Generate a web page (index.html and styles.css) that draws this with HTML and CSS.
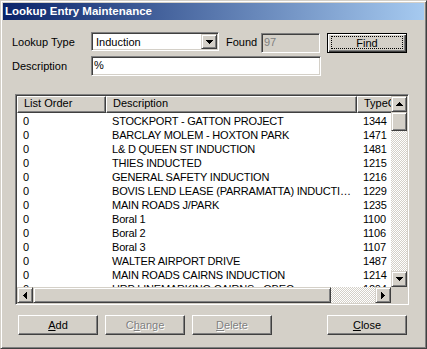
FILE: index.html
```html
<!DOCTYPE html>
<html lang="en">
<head>
    <meta charset="UTF-8">
    <title>Lookup Entry Maintenance</title>
    <link rel="stylesheet" href="styles.css">
</head>
<body>
    <div class="window">
        <div class="titlebar">Lookup Entry Maintenance</div>
        <div class="client">
            <div class="form-row row-type">
                <label class="field-label">Lookup Type</label>
                <div class="combo">
                    <span class="combo-text">Induction</span>
                    <span class="combo-btn">
                        <svg width="7" height="4" viewBox="0 0 7 4" shape-rendering="crispEdges"><path d="M0 0h7v1H0zM1 1h5v1H1zM2 2h3v1H2zM3 3h1v1H3z" fill="#000"/></svg>
                    </span>
                </div>
                <label class="found-label">Found</label>
                <div class="edit found-edit">97</div>
                <button class="btn btn-default find-btn"><span class="focus-rect">Find</span></button>
            </div>
            <div class="form-row row-desc">
                <label class="field-label">Description</label>
                <div class="edit desc-edit">%</div>
            </div>

            <div class="listview">
                <div class="lv-view">
                    <div class="lv-header">
                        <div class="lv-head col-order">List Order</div>
                        <div class="lv-head col-desc">Description</div>
                        <div class="lv-head col-type">TypeCode</div>
                    </div>
                    <div class="lv-row"><div class="col-order">0</div><div class="col-desc">STOCKPORT - GATTON PROJECT</div><div class="col-type">1344</div></div>
                    <div class="lv-row"><div class="col-order">0</div><div class="col-desc">BARCLAY MOLEM - HOXTON PARK</div><div class="col-type">1471</div></div>
                    <div class="lv-row"><div class="col-order">0</div><div class="col-desc">L&amp; D QUEEN ST INDUCTION</div><div class="col-type">1481</div></div>
                    <div class="lv-row"><div class="col-order">0</div><div class="col-desc">THIES INDUCTED</div><div class="col-type">1215</div></div>
                    <div class="lv-row"><div class="col-order">0</div><div class="col-desc">GENERAL SAFETY INDUCTION</div><div class="col-type">1216</div></div>
                    <div class="lv-row"><div class="col-order">0</div><div class="col-desc">BOVIS LEND LEASE (PARRAMATTA) INDUCTION</div><div class="col-type">1229</div></div>
                    <div class="lv-row"><div class="col-order">0</div><div class="col-desc">MAIN ROADS J/PARK</div><div class="col-type">1235</div></div>
                    <div class="lv-row"><div class="col-order">0</div><div class="col-desc">Boral 1</div><div class="col-type">1100</div></div>
                    <div class="lv-row"><div class="col-order">0</div><div class="col-desc">Boral 2</div><div class="col-type">1106</div></div>
                    <div class="lv-row"><div class="col-order">0</div><div class="col-desc">Boral 3</div><div class="col-type">1107</div></div>
                    <div class="lv-row"><div class="col-order">0</div><div class="col-desc">WALTER AIRPORT DRIVE</div><div class="col-type">1487</div></div>
                    <div class="lv-row"><div class="col-order">0</div><div class="col-desc">MAIN ROADS CAIRNS INDUCTION</div><div class="col-type">1214</div></div>
                    <div class="lv-row"><div class="col-order">0</div><div class="col-desc">HRP LINEMARKING CAIRNS - QBEC</div><div class="col-type">1204</div></div>
                </div>

                <div class="vscroll">
                    <div class="sb-btn">
                        <svg width="7" height="4" viewBox="0 0 7 4" shape-rendering="crispEdges"><path d="M3 0h1v1H3zM2 1h3v1H2zM1 2h5v1H1zM0 3h7v1H0z" fill="#000"/></svg>
                    </div>
                    <div class="sb-thumb v-thumb"></div>
                    <div class="sb-track"></div>
                    <div class="sb-btn">
                        <svg width="7" height="4" viewBox="0 0 7 4" shape-rendering="crispEdges"><path d="M0 0h7v1H0zM1 1h5v1H1zM2 2h3v1H2zM3 3h1v1H3z" fill="#000"/></svg>
                    </div>
                </div>

                <div class="hscroll">
                    <div class="sb-btn">
                        <svg width="4" height="7" viewBox="0 0 4 7" shape-rendering="crispEdges"><path d="M0 3h1v1H0zM1 2h1v3H1zM2 1h1v5H2zM3 0h1v7H3z" fill="#000"/></svg>
                    </div>
                    <div class="sb-thumb h-thumb"></div>
                    <div class="sb-track"></div>
                    <div class="sb-btn">
                        <svg width="4" height="7" viewBox="0 0 4 7" shape-rendering="crispEdges"><path d="M0 0h1v7H0zM1 1h1v5H1zM2 2h1v3H2zM3 3h1v1H3z" fill="#000"/></svg>
                    </div>
                </div>
                <div class="sb-corner"></div>
            </div>

            <div class="button-row">
                <button class="btn"><u>A</u>dd</button>
                <button class="btn" disabled>C<u>h</u>ange</button>
                <button class="btn" disabled><u>D</u>elete</button>
                <button class="btn close-btn"><u>C</u>lose</button>
            </div>
        </div>
    </div>
</body>
</html>
```

FILE: styles.css
```css
body {
    margin: 0;
    background-color: #d4d0c8;
    font-family: "Liberation Sans", Arial, sans-serif;
    font-size: 11px;
    color: #000;
}

.window {
    width: 427px;
    height: 349px;
    box-sizing: border-box;
    background-color: #d4d0c8;
    border: 1px solid;
    border-color: #d4d0c8 #404040 #404040 #d4d0c8;
    box-shadow: inset 1px 1px #fff, inset -1px -1px #808080;
    padding: 2px;
    display: flex;
    flex-direction: column;
}

.titlebar {
    height: 17px;
    padding-left: 2px;
    background: linear-gradient(to right, #0a246a, #a6caf0);
    color: #fff;
    font-weight: bold;
    font-size: 11.5px;
    line-height: 17px;
    white-space: nowrap;
}

.client {
    flex: 1;
}

/* top form */
.form-row {
    display: flex;
    align-items: flex-start;
    padding-left: 9px;
}

.row-type {
    margin-top: 12px;
}

.row-desc {
    margin-top: 3px;
}

.field-label {
    width: 79px;
    line-height: 13px;
    padding-top: 4px;
}

.found-label {
    width: 35px;
    margin-left: 7px;
    line-height: 13px;
    padding-top: 4px;
}

.edit {
    box-sizing: border-box;
    height: 20px;
    border: 1px solid;
    border-color: #808080 #fff #fff #808080;
    box-shadow: inset 1px 1px #404040, inset -1px -1px #d4d0c8;
    background-color: #fff;
    padding: 2px 2px 0;
    line-height: 13px;
    white-space: nowrap;
}

.found-edit {
    width: 59px;
    margin-top: 1px;
    background-color: #d4d0c8;
    color: #808080;
}

.desc-edit {
    width: 230px;
}

.combo {
    box-sizing: border-box;
    width: 128px;
    height: 19px;
    display: flex;
    border: 1px solid;
    border-color: #808080 #fff #fff #808080;
    box-shadow: inset 1px 1px #404040, inset -1px -1px #d4d0c8;
    background-color: #fff;
    padding: 1px;
}

.combo-text {
    flex: 1;
    padding: 2px 0 0 3px;
    line-height: 12px;
}

.combo-btn {
    box-sizing: border-box;
    width: 16px;
    display: flex;
    align-items: center;
    justify-content: center;
    background-color: #d4d0c8;
    border: 1px solid;
    border-color: #d4d0c8 #404040 #404040 #d4d0c8;
    box-shadow: inset 1px 1px #fff, inset -1px -1px #808080;
}

/* push buttons */
.btn {
    box-sizing: border-box;
    width: 80px;
    height: 20px;
    padding: 1px 0 0;
    font-family: inherit;
    font-size: 11px;
    color: #000;
    background-color: #d4d0c8;
    border: 1px solid;
    border-color: #fff #404040 #404040 #fff;
    box-shadow: inset -1px -1px #808080, inset 1px 1px #d4d0c8;
    line-height: 13px;
}

.btn:disabled {
    color: #808080;
    text-shadow: 1px 1px 0 #fff;
}

.btn-default {
    border: 1px solid #000;
    box-shadow: inset 1px 1px #fff, inset -1px -1px #404040, inset -2px -2px #808080;
    padding: 2px 3px 3px 3px;
    display: flex;
}

.find-btn {
    margin-left: 7px;
    margin-top: 1px;
}

.focus-rect {
    flex: 1;
    border: 1px dotted #000;
    line-height: 12px;
}

/* list view */
.listview {
    box-sizing: border-box;
    width: 394px;
    height: 211px;
    margin: 18px 0 0 12px;
    border: 1px solid;
    border-color: #808080 #fff #fff #808080;
    box-shadow: inset 1px 1px #404040, inset -1px -1px #d4d0c8;
    padding: 1px;
    display: grid;
    grid-template-columns: 374px 16px;
    grid-template-rows: 191px 16px;
    background-color: #fff;
}

.lv-view {
    overflow: hidden;
    background-color: #fff;
}

.lv-header {
    display: flex;
    height: 17px;
}

.lv-head {
    box-sizing: border-box;
    flex-shrink: 0;
    height: 17px;
    background-color: #d4d0c8;
    border: 1px solid;
    border-color: #fff #404040 #404040 #fff;
    box-shadow: inset -1px -1px #808080;
    padding: 1px 5px 0;
    line-height: 13px;
    white-space: nowrap;
    overflow: hidden;
}

.lv-row {
    display: flex;
    height: 14px;
    line-height: 16px;
    white-space: nowrap;
    letter-spacing: -0.2px;
}

.col-order,
.col-desc,
.col-type {
    box-sizing: border-box;
    flex-shrink: 0;
    padding: 0 6px;
    overflow: hidden;
    text-overflow: ellipsis;
}

.col-order {
    width: 89px;
}

.col-desc {
    width: 251px;
}

.col-type {
    width: 120px;
}

/* scroll bars */
.vscroll {
    display: flex;
    flex-direction: column;
}

.hscroll {
    display: flex;
}

.sb-btn,
.sb-thumb {
    box-sizing: border-box;
    flex-shrink: 0;
    background-color: #d4d0c8;
    border: 1px solid;
    border-color: #d4d0c8 #404040 #404040 #d4d0c8;
    box-shadow: inset 1px 1px #fff, inset -1px -1px #808080;
}

.sb-btn {
    width: 16px;
    height: 16px;
    display: flex;
    align-items: center;
    justify-content: center;
}

.v-thumb {
    height: 19px;
}

.h-thumb {
    width: 298px;
}

.sb-track {
    flex: 1;
    background: repeating-conic-gradient(#d4d0c8 0% 25%, #fff 0% 50%) 0 0 / 2px 2px;
}

.sb-corner {
    background-color: #d4d0c8;
}

/* bottom buttons */
.button-row {
    display: flex;
    gap: 7px;
    margin-top: 10px;
    padding-left: 15px;
}

.close-btn {
    margin-left: 48px;
}
```
